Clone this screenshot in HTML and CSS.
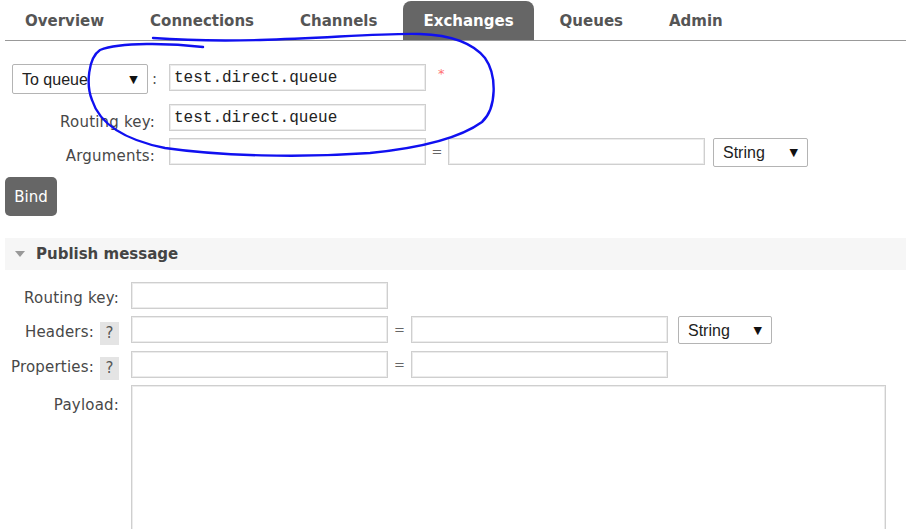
FILE: index.html
```html
<!DOCTYPE html>
<html lang="en">
<head>
<meta charset="utf-8">
<title>Exchange</title>
<link rel="stylesheet" href="styles.css">
</head>
<body>
<div class="page">
  <ul class="tabs">
    <li class="tab">Overview</li>
    <li class="tab">Connections</li>
    <li class="tab">Channels</li>
    <li class="tab active">Exchanges</li>
    <li class="tab">Queues</li>
    <li class="tab">Admin</li>
  </ul>

  <form class="bind">
    <div class="row row-first">
      <div class="label label-select">
        <span class="select-wrap w-dest">
          <select class="select"><option>To queue</option></select>
          <span class="arrow">▼</span>
        </span>
        <span class="colon">:</span>
      </div>
      <input class="field mono" type="text" value="test.direct.queue">
      <span class="req">*</span>
    </div>
    <div class="row row-second">
      <label class="label">Routing key:</label>
      <input class="field mono" type="text" value="test.direct.queue">
    </div>
    <div class="row row-third">
      <label class="label">Arguments:</label>
      <input class="field" type="text">
      <span class="eq">=</span>
      <input class="field" type="text">
      <span class="select-wrap w-type">
        <select class="select"><option>String</option></select>
        <span class="arrow">▼</span>
      </span>
    </div>
  </form>
  <button class="btn" type="button">Bind</button>

  <div class="section-head"><span class="tri"></span>Publish message</div>

  <form class="publish">
    <div class="prow">
      <label class="plabel"><span class="ltext">Routing key:</span></label>
      <input class="field" type="text">
    </div>
    <div class="prow">
      <label class="plabel"><span class="ltext">Headers:</span><span class="help">?</span></label>
      <input class="field" type="text">
      <span class="eq eq-p">=</span>
      <input class="field" type="text">
      <span class="select-wrap w-type2">
        <select class="select"><option>String</option></select>
        <span class="arrow">▼</span>
      </span>
    </div>
    <div class="prow">
      <label class="plabel"><span class="ltext">Properties:</span><span class="help">?</span></label>
      <input class="field" type="text">
      <span class="eq eq-p">=</span>
      <input class="field" type="text">
    </div>
    <div class="prow">
      <label class="plabel plabel-pay"><span class="ltext">Payload:</span></label>
      <textarea class="payload"></textarea>
    </div>
  </form>

  <svg class="scribble" width="906" height="529" viewBox="0 0 906 529" xmlns="http://www.w3.org/2000/svg">
    <path d="M203,47 C170,43 120,42 100,50 C88,58 86,85 92,100 C100,125 125,140 165,148 C220,156 300,158 370,153 C420,148 460,138 482,122 C497,108 497,75 485,58 C472,42 450,35 420,34 C380,33 330,38 260,40 C220,41 180,40 153,38" fill="none" stroke="#1010f0" stroke-width="2.4" stroke-linecap="round" stroke-linejoin="round"/>
  </svg>
</div>
</body>
</html>
```

FILE: styles.css
```css
html, body {
  margin: 0;
  padding: 0;
  height: 529px;
  overflow: hidden;
  background: #fff;
}

body {
  font-family: "DejaVu Sans", Verdana, sans-serif;
  font-size: 15px;
  color: #484848;
}

.page {
  position: relative;
  width: 906px;
  height: 529px;
  overflow: hidden;
}

/* tabs */
.tabs {
  list-style: none;
  margin: 0 0 0 5px;
  padding: 1px 0 0 0;
  display: flex;
  gap: 6px;
  border-bottom: 1px solid #999;
}

.tab {
  height: 39px;
  line-height: 41px;
  padding: 0 20px;
  font-weight: bold;
  color: #555;
  border-radius: 8px 8px 0 0;
}

.tab.active {
  background: #666;
  color: #fff;
}

/* form controls */
.field {
  box-sizing: border-box;
  width: 257px;
  height: 27px;
  margin: 0;
  padding: 0 3px;
  border: 1px solid #cfcfcf;
  box-shadow: inset 0 0 0 1px #ececec;
  background: #fff;
  font-family: "Liberation Sans", Arial, sans-serif;
  font-size: 15px;
  color: #222;
  outline: none;
}

.mono {
  font-family: "Liberation Mono", "Courier New", monospace;
  font-size: 16px;
  color: #222;
  padding-left: 4px;
}

.select-wrap {
  display: inline-grid;
}

.select-wrap > * {
  grid-area: 1 / 1;
}

.select {
  appearance: none;
  -webkit-appearance: none;
  box-sizing: border-box;
  margin: 0;
  padding: 0 0 0 9px;
  border: 1px solid #b4b4b4;
  border-radius: 2px;
  background: #fff;
  font-family: "Liberation Sans", Arial, sans-serif;
  font-size: 16px;
  color: #222;
  outline: none;
}

.arrow {
  justify-self: end;
  align-self: center;
  margin-right: 10px;
  font-size: 11px;
  color: #111;
  pointer-events: none;
}

.w-dest .select { width: 136px; height: 30px; }
.w-type .select { width: 95px; height: 29px; }
.w-type2 .select { width: 94px; height: 28px; }

/* bind section */
.bind {
  margin: 0;
  padding-left: 12px;
}

.row {
  display: flex;
  align-items: flex-start;
}

.row-first { margin-top: 23px; }
.row-second { margin-top: 10px; }
.row-third { margin-top: 7px; }

.label {
  width: 143px;
  margin-right: 14px;
  text-align: right;
  padding-top: 9px;
  box-sizing: border-box;
  letter-spacing: 0.2px;
}

.label-select {
  display: flex;
  align-items: center;
  padding-top: 0;
  height: 30px;
}

.colon {
  margin-left: 4px;
  color: #555;
}

.req {
  margin-left: 12px;
  margin-top: 2px;
  color: #ff7070;
  font-size: 13px;
}

.eq {
  width: 22px;
  text-align: center;
  font-size: 13px;
  color: #666;
  line-height: 27px;
}

.w-type { margin-left: 8px; }

.btn {
  display: block;
  margin: 10px 0 0 5px;
  width: 52px;
  height: 39px;
  padding: 0;
  border: 0;
  border-radius: 5px;
  background: #666;
  color: #fff;
  font-family: "DejaVu Sans", Verdana, sans-serif;
  font-size: 15px;
}

/* publish */
.section-head {
  margin: 22px 0 0 5px;
  height: 32px;
  line-height: 32px;
  background: #f6f6f6;
  font-weight: bold;
  color: #444;
  display: flex;
  align-items: center;
}

.tri {
  width: 0;
  height: 0;
  margin: 0 11px 0 10px;
  border-left: 5.5px solid transparent;
  border-right: 5.5px solid transparent;
  border-top: 6px solid #999;
}

.publish {
  margin: 12px 0 0 0;
}

.prow {
  display: flex;
  align-items: flex-start;
  margin-bottom: 7px;
}

.plabel {
  display: flex;
  justify-content: flex-end;
  align-items: flex-start;
  width: 119px;
  height: 27px;
  margin-right: 12px;
  box-sizing: border-box;
  white-space: nowrap;
  letter-spacing: 0.2px;
}

.ltext {
  padding-top: 7px;
}

.plabel-pay .ltext { padding-top: 11px; }

.help {
  flex: none;
  width: 19px;
  height: 23px;
  line-height: 23px;
  margin: 6px 0 0 6px;
  text-align: center;
  background: #e4e4e4;
  color: #555;
  letter-spacing: 0;
}

.eq-p { width: 23px; }

.w-type2 { margin-left: 10px; }

.payload {
  box-sizing: border-box;
  width: 755px;
  height: 200px;
  margin: 0;
  border: 1px solid #cfcfcf;
  box-shadow: inset 0 0 0 1px #ececec;
  resize: none;
  outline: none;
}

.scribble {
  position: absolute;
  left: 0;
  top: 0;
  pointer-events: none;
}
```
